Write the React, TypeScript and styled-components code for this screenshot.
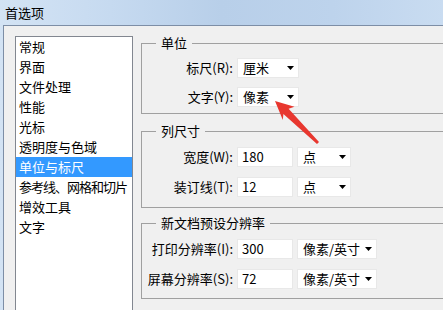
import React from "react";
import styled, { createGlobalStyle } from "styled-components";

const GlobalStyle = createGlobalStyle`
  html, body { margin: 0; padding: 0; }
  body {
    font-family: "Noto Sans CJK SC", "Noto Sans", sans-serif;
    font-size: 13px;
    color: #000;
    overflow: hidden;
  }
`;

const Window = styled.div`
  position: relative;
  width: 443px;
  height: 310px;
  overflow: hidden;
  display: flex;
  flex-direction: column;
  background: linear-gradient(90deg, #d3e3f4 0%, #c6daf0 25%, #b8cfe9 50%, #bdd3ec 75%, #c9dcf1 100%);
`;

const TitleBar = styled.div`
  height: 25px;
  flex-shrink: 0;
  display: flex;
  align-items: center;
  padding-left: 5px;
  font-size: 13px;
  line-height: 16px;
`;

const Frame = styled.div`
  flex: 1;
  margin-left: 3px;
  border-top: 1px solid #7d8ea6;
  border-left: 1px solid #7d8ea6;
  background: #f0f0f0;
  display: flex;
  align-items: flex-start;
  gap: 8px;
  padding: 10px 0 0 11px;
  overflow: hidden;
`;

const ListBox = styled.div`
  width: 118px;
  height: 300px;
  flex-shrink: 0;
  box-sizing: border-box;
  border: 1px solid #828790;
  background: #fff;
  display: flex;
  flex-direction: column;
`;

const ListItem = styled.div<{ $selected?: boolean; $condensed?: boolean }>`
  height: 20px;
  line-height: 20px;
  padding-left: 3px;
  white-space: nowrap;
  overflow: hidden;
  letter-spacing: ${(p) => (p.$condensed ? "-1px" : "normal")};
  background: ${(p) => (p.$selected ? "#3399ff" : "transparent")};
  color: ${(p) => (p.$selected ? "#fff" : "#000")};
`;

const Options = styled.div`
  width: 330px;
  flex-shrink: 0;
  display: flex;
  flex-direction: column;
`;

const Group = styled.fieldset<{ $top: number }>`
  margin: ${(p) => p.$top}px 0 0 0;
  padding: 0;
  border: 1px solid #a0a0a0;
  min-width: 0;
`;

const Legend = styled.legend`
  margin-left: 14px;
  padding: 0 5px;
  line-height: 14px;
  font-size: 13px;
`;

const GroupBody = styled.div<{ $pt: number; $pb: number; $gap: number }>`
  display: flex;
  flex-direction: column;
  gap: ${(p) => p.$gap}px;
  padding: ${(p) => p.$pt}px 0 ${(p) => p.$pb}px 0;
`;

const Row = styled.div`
  display: grid;
  grid-template-columns: 91px auto auto;
  column-gap: 4px;
  align-items: center;
  justify-content: start;
  height: 20px;
`;

const Label = styled.span`
  text-align: right;
  white-space: nowrap;
  line-height: 20px;
`;

const Field = styled.span<{ $w: number }>`
  width: ${(p) => p.$w}px;
  height: 20px;
  box-sizing: border-box;
  background: #fff;
  border: 1px solid #e8e8e8;
  padding-left: 4px;
  line-height: 18px;
  white-space: nowrap;
`;

const Select = styled.span<{ $w: number }>`
  width: ${(p) => p.$w}px;
  height: 20px;
  box-sizing: border-box;
  background: #fff;
  border: 1px solid #e8e8e8;
  padding: 0 4px 0 5px;
  display: flex;
  align-items: center;
  justify-content: space-between;
  line-height: 18px;
  white-space: nowrap;
`;

const Caret = () => (
  <svg width="7" height="4" viewBox="0 0 7 4" aria-hidden>
    <polygon points="0,0 7,0 3.5,4" fill="#000" />
  </svg>
);

const Annotation = styled.svg`
  position: absolute;
  left: 0;
  top: 0;
  pointer-events: none;
`;

const items = [
  "常规",
  "界面",
  "文件处理",
  "性能",
  "光标",
  "透明度与色域",
  "单位与标尺",
  "参考线、网格和切片",
  "增效工具",
  "文字",
];

export default function App() {
  return (
    <>
      <GlobalStyle />
      <Window>
        <TitleBar>首选项</TitleBar>
        <Frame>
          <ListBox>
            {items.map((t) => (
              <ListItem
                key={t}
                $selected={t === "单位与标尺"}
                $condensed={t.length > 8}
              >
                {t}
              </ListItem>
            ))}
          </ListBox>
          <Options>
            <Group $top={0}>
              <Legend>单位</Legend>
              <GroupBody $pt={8} $pb={6} $gap={9}>
                <Row>
                  <Label>标尺(R):</Label>
                  <Select $w={62}>
                    厘米
                    <Caret />
                  </Select>
                </Row>
                <Row>
                  <Label>文字(Y):</Label>
                  <Select $w={62}>
                    像素
                    <Caret />
                  </Select>
                </Row>
              </GroupBody>
            </Group>
            <Group $top={10}>
              <Legend>列尺寸</Legend>
              <GroupBody $pt={9} $pb={10} $gap={10}>
                <Row>
                  <Label>宽度(W):</Label>
                  <Field $w={56}>180</Field>
                  <Select $w={54}>
                    点
                    <Caret />
                  </Select>
                </Row>
                <Row>
                  <Label>装订线(T):</Label>
                  <Field $w={56}>12</Field>
                  <Select $w={54}>
                    点
                    <Caret />
                  </Select>
                </Row>
              </GroupBody>
            </Group>
            <Group $top={8}>
              <Legend>新文档预设分辨率</Legend>
              <GroupBody $pt={9} $pb={9} $gap={10}>
                <Row>
                  <Label>打印分辨率(I):</Label>
                  <Field $w={56}>300</Field>
                  <Select $w={80}>
                    像素/英寸
                    <Caret />
                  </Select>
                </Row>
                <Row>
                  <Label>屏幕分辨率(S):</Label>
                  <Field $w={56}>72</Field>
                  <Select $w={80}>
                    像素/英寸
                    <Caret />
                  </Select>
                </Row>
              </GroupBody>
            </Group>
          </Options>
        </Frame>
        <Annotation width="443" height="310" viewBox="0 0 443 310">
          <polygon
            points="275,101 294.5,106.8 288.6,108.8 319,142 317,144 283.4,114 282.8,120"
            fill="#e8372f"
          />
        </Annotation>
      </Window>
    </>
  );
}
